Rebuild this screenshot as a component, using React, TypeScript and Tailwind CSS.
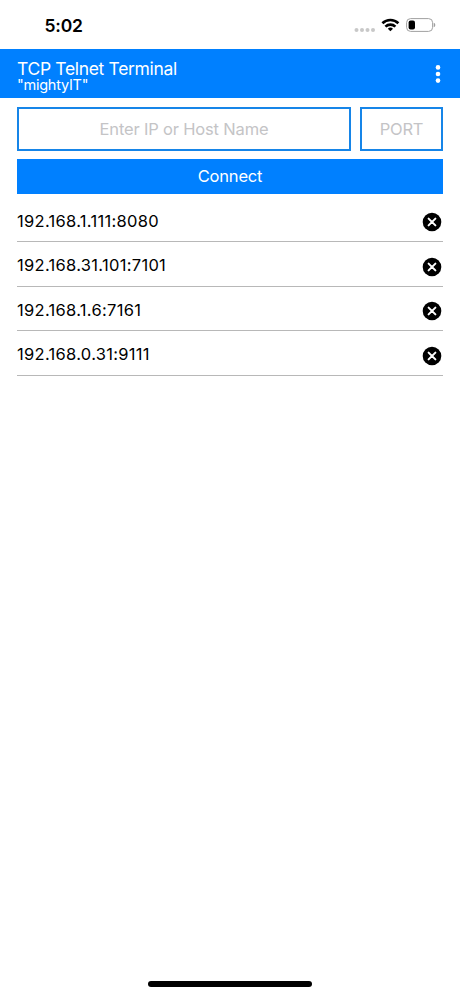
const HOSTS = ["192.168.1.111:8080", "192.168.31.101:7101", "192.168.1.6:7161", "192.168.0.31:9111"];

function StatusBar() {
  return (
    <div className="flex h-[49px] items-start justify-between pr-[24px] pl-[44.5px]">
      <span className="mt-[14px] text-[17.5px] leading-6 font-semibold tracking-[-0.2px]">5:02</span>
      <div className="mt-[18px] flex items-center">
        <svg width="22" height="14" viewBox="0 0 22 14" fill="#c8c8c8">
          <circle cx="2.5" cy="12" r="2" />
          <circle cx="8" cy="12" r="2" />
          <circle cx="13.5" cy="12" r="2" />
          <circle cx="19" cy="12" r="2" />
        </svg>
        <svg className="ml-[5px]" width="19" height="14" viewBox="0 0 19 14" fill="none" stroke="black" strokeWidth="2.6">
          <path d="M1.4 5.2a11.5 11.5 0 0 1 16 0" />
          <path d="M4.4 8.6a7.2 7.2 0 0 1 10 0" />
          <path d="M9.4 13.3l-2.6-2.6a3.8 3.8 0 0 1 5.2 0z" fill="black" stroke="none" />
        </svg>
        <svg className="ml-[6px]" width="30" height="14" viewBox="0 0 30 14">
          <rect x="0.6" y="0.6" width="26" height="12.8" rx="4" fill="none" stroke="#a0a0a0" />
          <rect x="2.6" y="2.4" width="6.4" height="9.2" rx="2" />
          <path d="M27.7 4.8v4.4a2.3 2.3 0 0 0 0-4.4z" fill="#a0a0a0" />
        </svg>
      </div>
    </div>
  );
}

function Header() {
  return (
    <header className="flex h-[49px] items-center justify-between bg-[#0080ff] pr-[19.5px] pl-[17px] text-white">
      <div className="pt-[2px]">
        <h1 className="text-[17.5px] leading-5 tracking-[-0.33px]">TCP Telnet Terminal</h1>
        <p className="text-[14.5px] leading-3 tracking-[-0.25px]">"mightyIT"</p>
      </div>
      <svg width="6" height="20" viewBox="0 0 6 20" fill="white">
        <circle cx="3" cy="3.4" r="2.3" />
        <circle cx="3" cy="10" r="2.3" />
        <circle cx="3" cy="16.6" r="2.3" />
      </svg>
    </header>
  );
}

function RemoveIcon() {
  return (
    <svg width="20" height="20" viewBox="0 0 20 20">
      <circle cx="10" cy="10" r="9.3" />
      <path d="M6.6 6.6l6.8 6.8M13.4 6.6l-6.8 6.8" stroke="white" strokeWidth="2" strokeLinecap="round" />
    </svg>
  );
}

export default function App() {
  return (
    <div className="flex h-[996px] w-[460px] flex-col bg-white font-['Inter',sans-serif] text-black">
      <StatusBar />
      <Header />
      <main className="px-[17px] pt-[9px]">
        <div className="flex gap-[9px]">
          <div className="flex h-[44px] w-[334px] items-center justify-center border-[2px] border-[#1685e8] pt-px text-[16.5px] tracking-[-0.17px] text-[#c4c4c6]">
            Enter IP or Host Name
          </div>
          <div className="flex h-[44px] flex-1 items-center justify-center border-[2px] border-[#1685e8] pt-px text-[16.5px] tracking-[-0.2px] text-[#c4c4c6]">
            PORT
          </div>
        </div>
        <button className="mt-[8px] flex h-[35px] w-full items-center justify-center bg-[#0080ff] text-[16.5px] tracking-[-0.2px] text-white">
          Connect
        </button>
        <ul className="mt-[3.5px]">
          {HOSTS.map((host) => (
            <li key={host} className="flex h-[44.5px] items-center justify-between border-b border-[#b8b8b8] pr-[1.5px]">
              <span className="pt-[4px] text-[16.5px] tracking-[0.3px]">{host}</span>
              <div className="pt-[6px]">
                <RemoveIcon />
              </div>
            </li>
          ))}
        </ul>
      </main>
      <div className="mt-auto mb-[9px] h-[6px] w-[164px] self-center rounded-full bg-black" />
    </div>
  );
}
